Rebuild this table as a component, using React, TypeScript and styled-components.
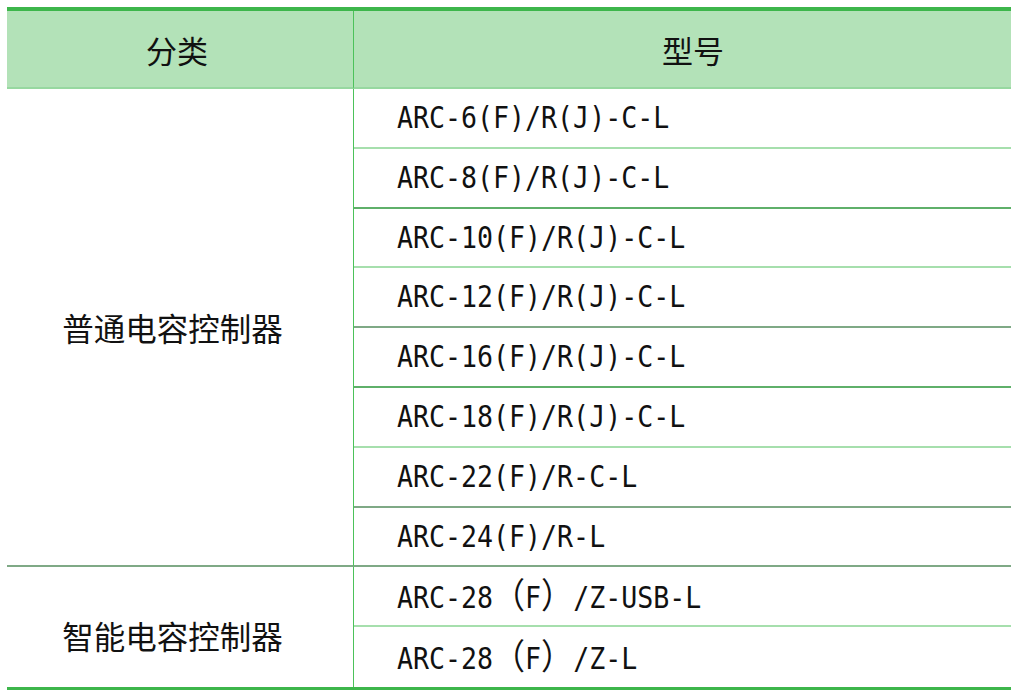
import React from "react";
import styled, { createGlobalStyle } from "styled-components";

const Global = createGlobalStyle`
  html, body { margin: 0; padding: 0; background: #ffffff; }
  body { font-family: "Noto Sans CJK SC", sans-serif; color: #111; }
`;

const LIGHT = "#a6dfad";
const MID = "#5fb06a";
const GRAY = "#7fa986";

const Page = styled.div`
  padding: 7px 8px 0 7px;
`;

const Table = styled.div`
  display: grid;
  grid-template-columns: 347px 657px;
  grid-template-rows: 78px repeat(10, 59.8px);
  border-top: 4px solid #3db64b;
  border-bottom: 3px solid #3db64b;
  width: 1004px;
`;

const HeadCell = styled.div<{ $col: number; $shift: number }>`
  grid-column: ${(p) => p.$col};
  grid-row: 1;
  background: #b3e2b8;
  border-bottom: 2px solid #97d8a0;
  border-right: ${(p) => (p.$col === 1 ? "1px solid #4cc25a" : "none")};
  display: flex;
  align-items: center;
  justify-content: center;
  padding-left: ${(p) => (p.$shift > 0 ? p.$shift : 0)}px;
  padding-right: ${(p) => (p.$shift < 0 ? -p.$shift : 0)}px;
  font-family: "Noto Sans CJK SC", sans-serif;
  font-size: 31px;
  color: #111;
`;

const GroupCell = styled.div<{ $start: number; $span: number; $line?: string; $offset: number }>`
  grid-column: 1;
  grid-row: ${(p) => p.$start} / span ${(p) => p.$span};
  border-right: 1px solid #4cc25a;
  border-bottom: ${(p) => (p.$line ? `2px solid ${p.$line}` : "none")};
  display: flex;
  align-items: center;
  justify-content: center;
  padding-right: 15px;
  padding-top: ${(p) => p.$offset}px;
  font-family: "Noto Sans CJK SC", sans-serif;
  font-size: 31.5px;
  color: #111;
`;

const ModelCell = styled.div<{ $row: number; $line?: string }>`
  grid-column: 2;
  grid-row: ${(p) => p.$row};
  border-bottom: ${(p) => (p.$line ? `2px solid ${p.$line}` : "none")};
  display: flex;
  align-items: center;
  padding-left: 43px;
  padding-top: 1px;
`;

const ModelText = styled.span`
  display: inline-block;
  font-family: "DejaVu Sans Mono", monospace;
  font-size: 26.6px;
  line-height: 1;
  color: #111;
  white-space: pre;
  transform: scaleY(1.1);
  transform-origin: center;
`;

const Wide = styled.span`
  font-family: "Noto Sans CJK SC", sans-serif;
  font-size: 32px;
  line-height: 0.8;
`;

const models: { text: string; line?: string }[] = [
  { text: "ARC-6(F)/R(J)-C-L", line: LIGHT },
  { text: "ARC-8(F)/R(J)-C-L", line: MID },
  { text: "ARC-10(F)/R(J)-C-L", line: LIGHT },
  { text: "ARC-12(F)/R(J)-C-L", line: GRAY },
  { text: "ARC-16(F)/R(J)-C-L", line: MID },
  { text: "ARC-18(F)/R(J)-C-L", line: LIGHT },
  { text: "ARC-22(F)/R-C-L", line: GRAY },
  { text: "ARC-24(F)/R-L", line: GRAY },
  { text: "ARC-28（F）/Z-USB-L", line: LIGHT },
  { text: "ARC-28（F）/Z-L" },
];

function renderModel(text: string) {
  const parts: React.ReactNode[] = [];
  let buf = "";
  Array.from(text).forEach((ch, i) => {
    if (ch === "（" || ch === "）") {
      if (buf) parts.push(buf);
      buf = "";
      parts.push(<Wide key={i}>{ch}</Wide>);
    } else {
      buf += ch;
    }
  });
  if (buf) parts.push(buf);
  return parts;
}

export default function App() {
  return (
    <>
      <Global />
      <Page>
        <Table>
          <HeadCell $col={1} $shift={-6}>分类</HeadCell>
          <HeadCell $col={2} $shift={21}>型号</HeadCell>
          <GroupCell $start={2} $span={8} $line={GRAY} $offset={0}>
            普通电容控制器
          </GroupCell>
          <GroupCell $start={10} $span={2} $offset={16}>
            智能电容控制器
          </GroupCell>
          {models.map((m, i) => (
            <ModelCell key={m.text + i} $row={i + 2} $line={m.line}>
              <ModelText>{renderModel(m.text)}</ModelText>
            </ModelCell>
          ))}
        </Table>
      </Page>
    </>
  );
}
